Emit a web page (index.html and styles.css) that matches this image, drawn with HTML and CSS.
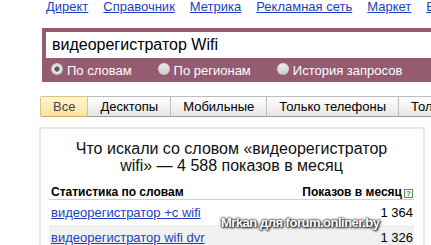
FILE: index.html
```html
<!DOCTYPE html>
<html lang="ru">
<head>
<meta charset="utf-8">
<title>Подбор слов</title>
<link rel="stylesheet" href="styles.css">
</head>
<body>
<div class="page">
  <nav class="services">
    <a href="#">Директ</a>
    <a href="#">Справочник</a>
    <a href="#">Метрика</a>
    <a href="#">Рекламная сеть</a>
    <a href="#">Маркет</a>
    <a href="#">Вебмастер</a>
  </nav>

  <form class="search">
    <div class="field">видеорегистратор Wifi</div>
    <div class="modes">
      <label class="mode"><span class="radio checked"></span>По словам</label>
      <label class="mode"><span class="radio"></span>По регионам</label>
      <label class="mode"><span class="radio"></span>История запросов</label>
    </div>
  </form>

  <div class="tabs">
    <span class="tab active">Все</span>
    <span class="tab">Десктопы</span>
    <span class="tab">Мобильные</span>
    <span class="tab">Только телефоны</span>
    <span class="tab">Только планшеты</span>
  </div>

  <section class="panel">
    <h1 class="title">Что искали со словом «видеорегистратор wifi» — 4&nbsp;588 показов в месяц</h1>
    <table class="stats">
      <thead>
        <tr>
          <th class="phrase">Статистика по словам</th>
          <th class="count">Показов в месяц<span class="help">?</span></th>
        </tr>
      </thead>
      <tbody>
        <tr>
          <td class="phrase"><a href="#">видеорегистратор +с wifi</a></td>
          <td class="count">1&nbsp;364</td>
        </tr>
        <tr class="odd">
          <td class="phrase"><a href="#">видеорегистратор wifi dvr</a></td>
          <td class="count">1&nbsp;326</td>
        </tr>
      </tbody>
    </table>
    <div class="watermark">Mrkan для forum.onliner.by</div>
  </section>
</div>
</body>
</html>
```

FILE: styles.css
```css
html, body {
  margin: 0;
  padding: 0;
  overflow: hidden;
  background: #fff;
}

body {
  font-family: "Liberation Sans", Arial, sans-serif;
  color: #000;
}

.page {
  width: 431px;
  height: 245px;
  overflow: hidden;
}

/* top services line */
.services {
  display: flex;
  gap: 15px;
  margin-left: 46px;
  height: 13px;
  font-size: 13px;
  line-height: 13px;
  white-space: nowrap;
}

.services a {
  flex-shrink: 0;
  color: #1c3fc0;
  text-decoration: underline;
}

/* search block */
.search {
  margin: 15px 0 0 42px;
  padding: 4px 0 0 4px;
  height: 50px;
  background: #955b70;
}

.field {
  height: 26px;
  padding-left: 6px;
  background: #fff;
  font-size: 16px;
  line-height: 26px;
  color: #000;
  white-space: nowrap;
}

.modes {
  display: flex;
  align-items: center;
  height: 24px;
  padding-left: 5px;
}

.mode {
  display: flex;
  align-items: center;
  margin-right: 26px;
  font-size: 13px;
  line-height: 15px;
  color: #fff;
  white-space: nowrap;
}

.radio {
  width: 12px;
  height: 12px;
  margin: -2px 4px 0 0;
  border-radius: 50%;
  box-sizing: border-box;
  background: linear-gradient(#ececec, #cdcdcd);
  box-shadow: inset 0 0 0 1px rgba(0, 0, 0, 0.05);
}

.radio.checked {
  background: radial-gradient(circle, #5e5e5e 0 2.4px, #f2f2f2 3px 3.6px, #d2d2d2 4.2px);
}

/* tabs */
.tabs {
  display: flex;
  margin: 14px 0 0 40px;
  white-space: nowrap;
}

.tab {
  flex-shrink: 0;
  height: 19px;
  padding: 0 12px;
  margin-left: -1px;
  border: 1px solid #bdbdbd;
  border-bottom-color: #9a9a9a;
  background: linear-gradient(#ffffff, #e6e6e6);
  font-size: 13px;
  line-height: 19px;
  color: #000;
}

.tab:first-child {
  margin-left: 0;
}

.tab.active {
  position: relative;
  border-color: #dcc383;
  border-bottom-color: #c9ad66;
  border-radius: 2px 0 0 2px;
  background: linear-gradient(#fff5d2, #fde39c);
  color: #444;
}

/* result panel */
.panel {
  position: relative;
  margin: 10px 6px 0 39px;
  padding: 11px 9px 0 8px;
  border: 2px solid #e7e7e7;
  height: 200px;
}

.title {
  margin: 0 20px 11px;
  font-size: 16px;
  font-weight: normal;
  line-height: 17px;
  text-align: center;
  color: #111;
}

.stats {
  width: 100%;
  border-collapse: collapse;
}

.stats th {
  height: 14px;
  padding: 0 0 0 2px;
  font-size: 12px;
  font-weight: bold;
  line-height: 14px;
  text-align: left;
  border-bottom: 1px solid #cfcfcf;
  white-space: nowrap;
}

.stats th.count {
  padding: 0 1px 0 0;
  text-align: right;
}

.help {
  display: inline-block;
  width: 7px;
  height: 7px;
  margin-left: 2px;
  border: 1px solid #4f9a3c;
  font-size: 8px;
  line-height: 7px;
  text-align: center;
  color: #3d8a2c;
  vertical-align: 0;
}

.stats td {
  height: 25px;
  padding: 0 0 0 2px;
  font-size: 13px;
  line-height: 25px;
  white-space: nowrap;
}

.stats td.count {
  padding: 0 1px 0 0;
  text-align: right;
  color: #000;
}

.stats td a {
  color: #1c3fc0;
  text-decoration: underline;
}

.stats tr.odd td {
  background: #f0f0f0;
}

.watermark {
  position: absolute;
  left: 180px;
  top: 87px;
  font-size: 13px;
  font-weight: bold;
  line-height: 14px;
  letter-spacing: -0.5px;
  color: #fff;
  white-space: nowrap;
  text-shadow: 0 0 2px #111, 0 0 3px #222, 1px 1px 2px #333;
}
```
